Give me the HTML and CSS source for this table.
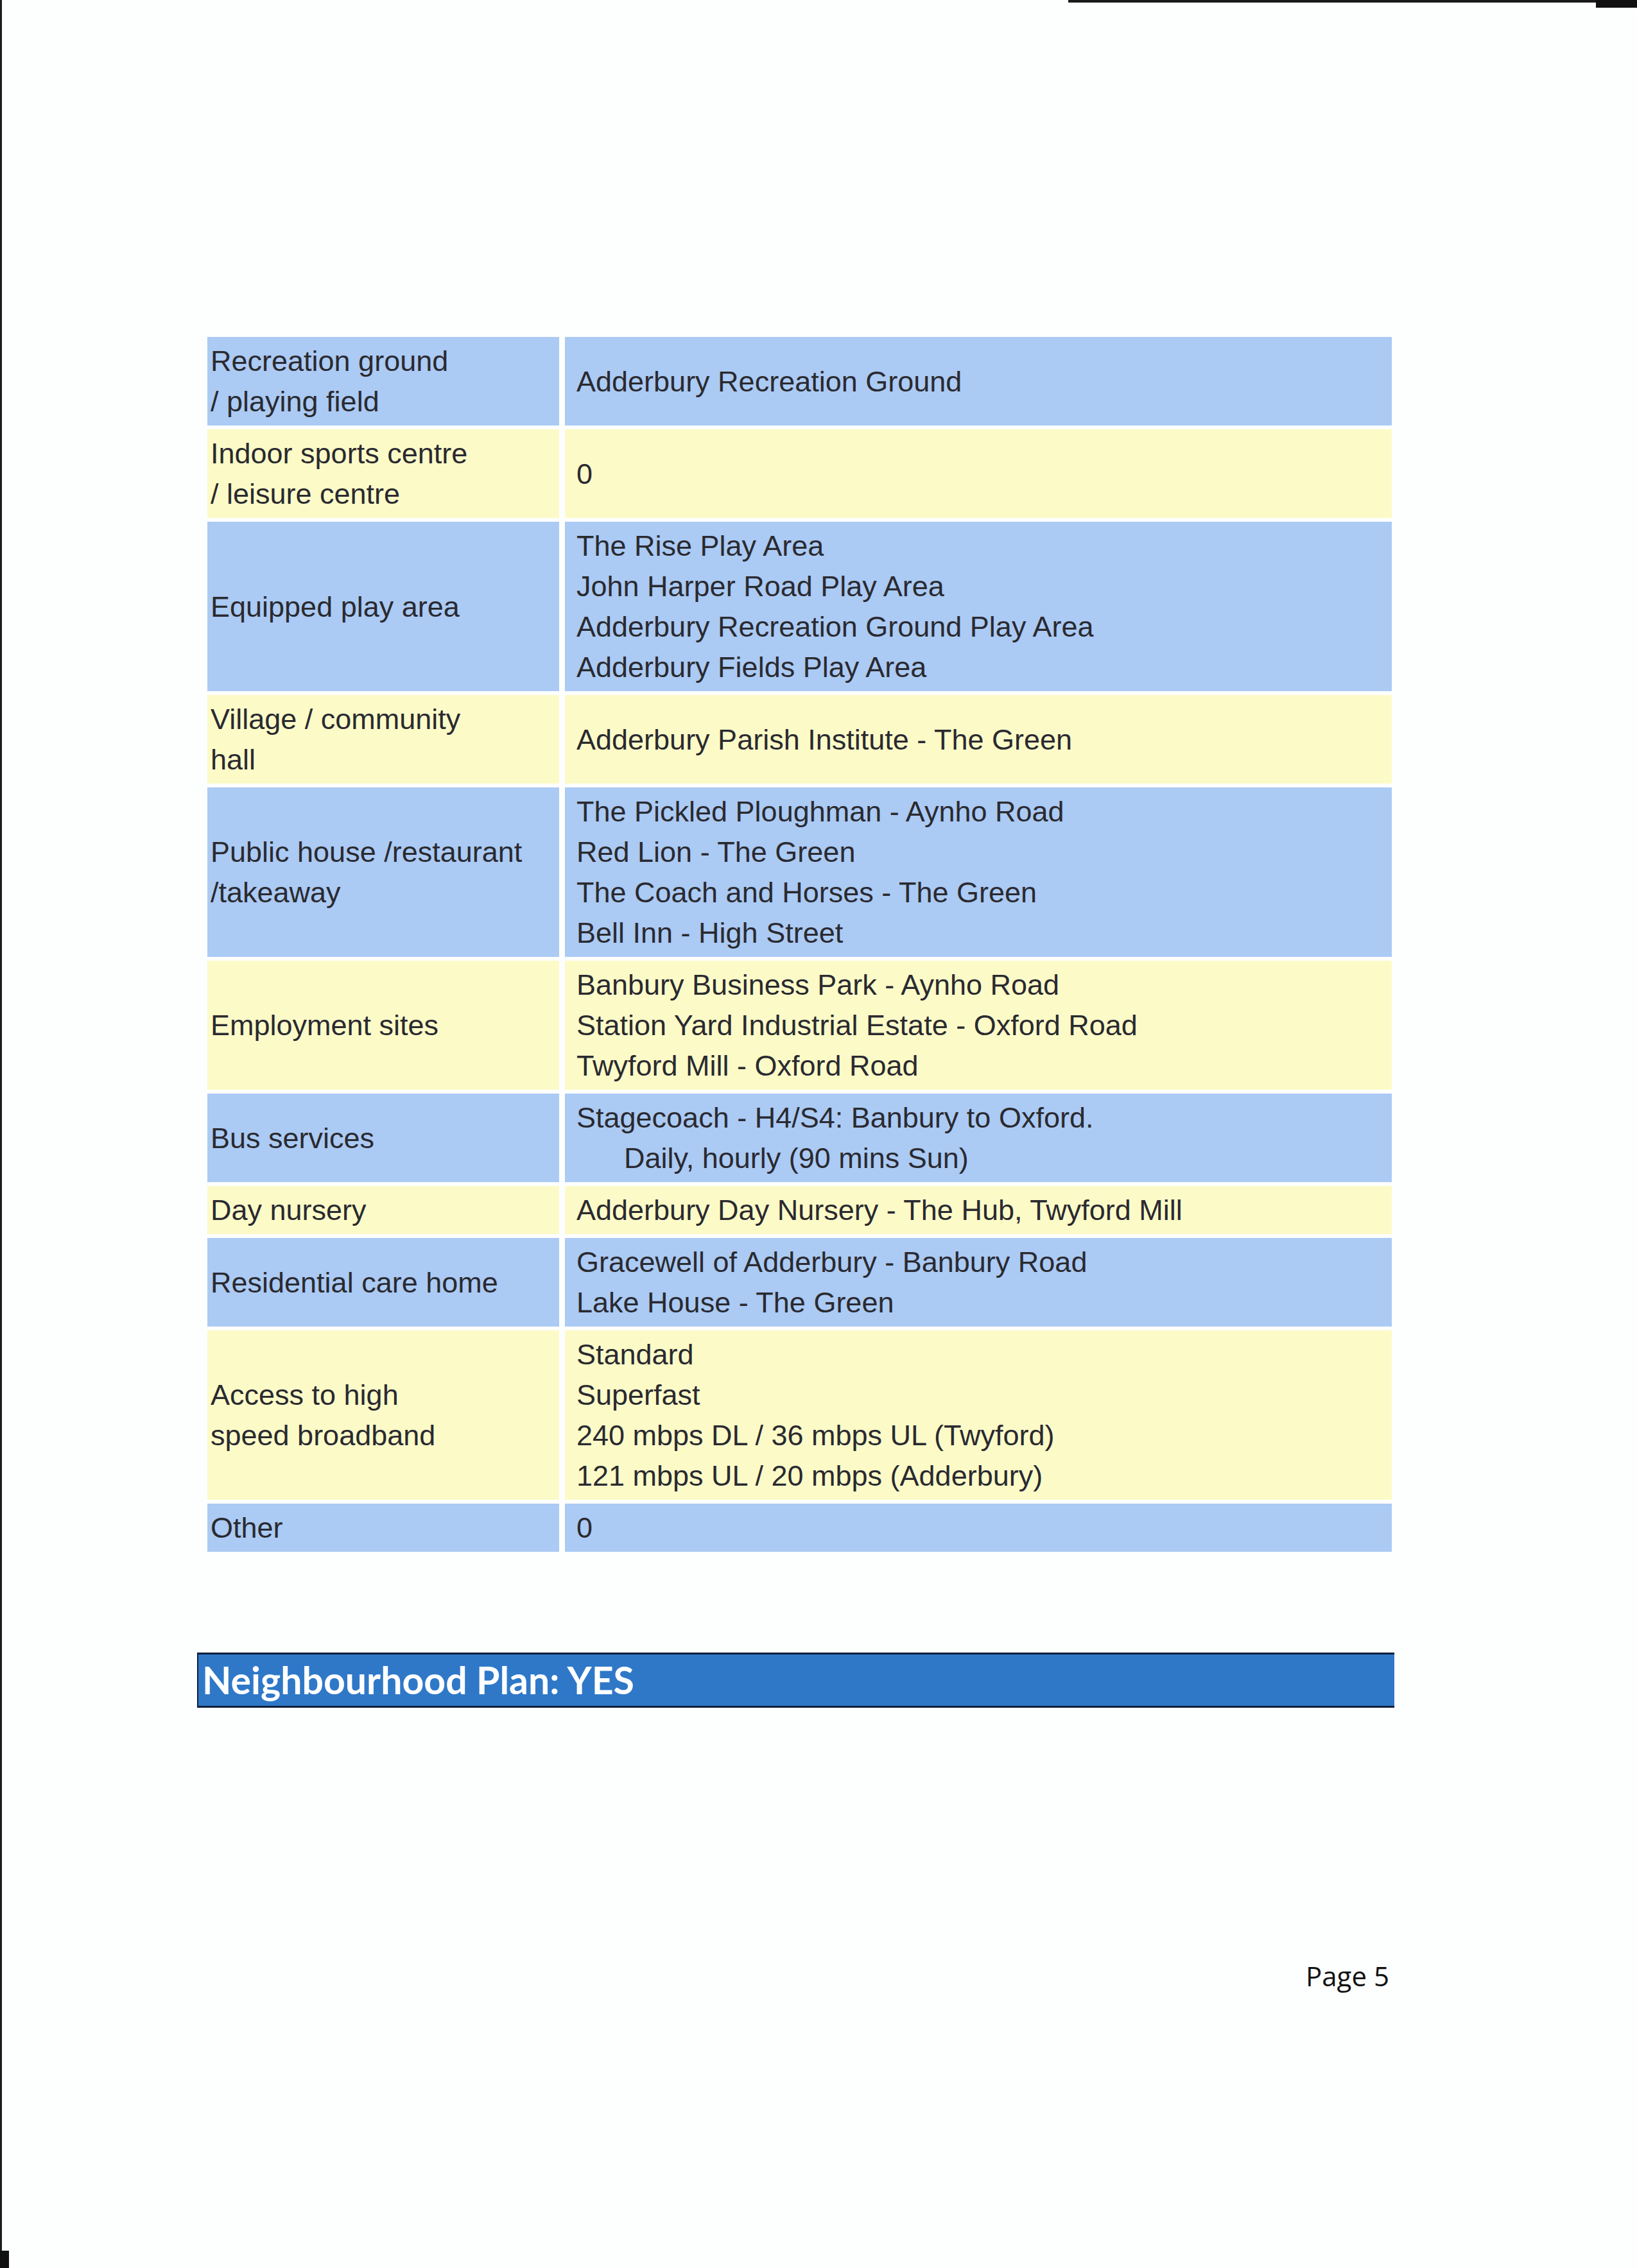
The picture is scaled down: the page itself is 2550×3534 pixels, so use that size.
FILE: index.html
```html
<!DOCTYPE html>
<html lang="en">
<head>
<meta charset="utf-8">
<title>Page 5</title>
<link rel="stylesheet" href="styles.css">
</head>
<body>
<div class="page">
  <div class="scan-top-line"></div>
  <div class="scan-top-block"></div>
  <div class="scan-left-line"></div>
  <div class="scan-left-block"></div>

  <div class="facilities">
    <div class="cell label blue">Recreation ground<br>/ playing field</div>
    <div class="cell value blue">Adderbury Recreation Ground</div>

    <div class="cell label yellow">Indoor sports centre<br>/ leisure centre</div>
    <div class="cell value yellow">0</div>

    <div class="cell label blue">Equipped play area</div>
    <div class="cell value blue">The Rise Play Area<br>John Harper Road Play Area<br>Adderbury Recreation Ground Play Area<br>Adderbury Fields Play Area</div>

    <div class="cell label yellow">Village / community<br>hall</div>
    <div class="cell value yellow">Adderbury Parish Institute - The Green</div>

    <div class="cell label blue">Public house /restaurant<br>/takeaway</div>
    <div class="cell value blue">The Pickled Ploughman - Aynho Road<br>Red Lion - The Green<br>The Coach and Horses - The Green<br>Bell Inn - High Street</div>

    <div class="cell label yellow">Employment sites</div>
    <div class="cell value yellow">Banbury Business Park - Aynho Road<br>Station Yard Industrial Estate - Oxford Road<br>Twyford Mill - Oxford Road</div>

    <div class="cell label blue">Bus services</div>
    <div class="cell value blue">Stagecoach - H4/S4: Banbury to Oxford.<br><span class="indent">Daily, hourly (90 mins Sun)</span></div>

    <div class="cell label yellow">Day nursery</div>
    <div class="cell value yellow">Adderbury Day Nursery - The Hub, Twyford Mill</div>

    <div class="cell label blue">Residential care home</div>
    <div class="cell value blue">Gracewell of Adderbury - Banbury Road<br>Lake House - The Green</div>

    <div class="cell label yellow">Access to high<br>speed broadband</div>
    <div class="cell value yellow">Standard<br>Superfast<br>240 mbps DL / 36 mbps UL (Twyford)<br>121 mbps UL / 20 mbps (Adderbury)</div>

    <div class="cell label blue">Other</div>
    <div class="cell value blue">0</div>
  </div>

  <div class="banner">Neighbourhood Plan: YES</div>

  <div class="footer">Page 5</div>
</div>
</body>
</html>
```

FILE: styles.css
```css
html, body {
  margin: 0;
  padding: 0;
  background: #fdfefe;
}

.page {
  position: relative;
  width: 2550px;
  height: 3534px;
  overflow: hidden;
  background: #fdfefe;
}

.scan-top-line {
  position: absolute;
  left: 1664px;
  top: 0;
  width: 886px;
  height: 4px;
  background: #1a1a1a;
}

.scan-top-block {
  position: absolute;
  left: 2486px;
  top: 0;
  width: 64px;
  height: 12px;
  background: #111;
}

.scan-left-line {
  position: absolute;
  left: 0;
  top: 0;
  width: 3px;
  height: 3534px;
  background: #1c1c1c;
}

.scan-left-block {
  position: absolute;
  left: 0;
  top: 3507px;
  width: 14px;
  height: 27px;
  background: #111;
}

.facilities {
  display: grid;
  grid-template-columns: 548px 1288px;
  column-gap: 9px;
  row-gap: 6px;
  margin-left: 323px;
  padding-top: 525px;
  font-family: "Liberation Sans", Arial, sans-serif;
  font-size: 45px;
  line-height: 63px;
  color: #2a2a30;
}

.cell {
  display: flex;
  flex-direction: column;
  justify-content: center;
  padding: 6px 0;
}

.label {
  padding-left: 5px;
}

.value {
  padding-left: 18px;
}

.blue {
  background: #abcaf4;
}

.yellow {
  background: #fcfbc8;
}

.indent {
  padding-left: 74px;
}

.banner {
  margin-left: 307px;
  margin-top: 157px;
  width: 1865px;
  height: 86px;
  box-sizing: border-box;
  border-top: 3px solid #0d1f3c;
  border-bottom: 3px solid #0d1f3c;
  border-left: 2px solid #0d1f3c;
  background: #2f78c8;
  color: #ffffff;
  font-family: Lato, "Open Sans", sans-serif;
  font-weight: 700;
  font-size: 59px;
  line-height: 80px;
  padding-left: 6px;
}

.footer {
  margin-top: 390px;
  margin-left: 2034px;
  font-family: "Open Sans", Lato, sans-serif;
  font-size: 42px;
  line-height: 56px;
  color: #111;
}
```
